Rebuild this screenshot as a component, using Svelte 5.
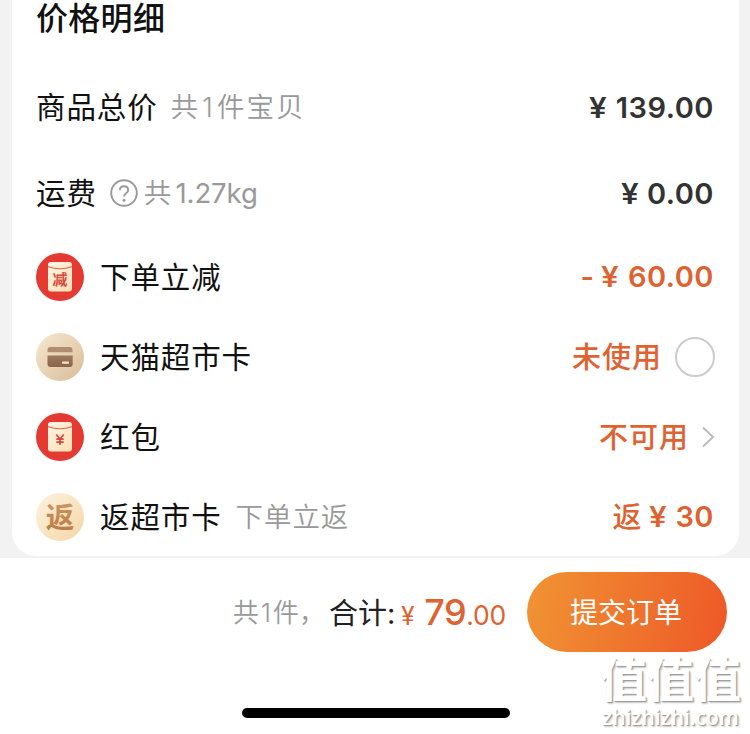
<script lang="ts">
	type Discount = {
		icon: 'minus' | 'card' | 'packet' | 'rebate';
		label: string;
		note?: string;
		prefix?: string;
		amount?: string;
		status?: string;
		control?: 'radio' | 'arrow';
	};

	const discounts: Discount[] = [
		{ icon: 'minus', label: '下单立减', prefix: '-', amount: '60.00' },
		{ icon: 'card', label: '天猫超市卡', status: '未使用', control: 'radio' },
		{ icon: 'packet', label: '红包', status: '不可用', control: 'arrow' },
		{ icon: 'rebate', label: '返超市卡', note: '下单立返', prefix: '返', amount: '30' }
	];
</script>

<svelte:head>
	<title>价格明细</title>
</svelte:head>

<div class="page">
	<section class="card">
		<h2>价格明细</h2>

		<div class="row tall">
			<span class="label">商品总价</span>
			<span class="note goods">共<i>1</i>件宝贝</span>
			<span class="amount"><span class="yen">¥</span>139.00</span>
		</div>

		<div class="row tall">
			<span class="label">运费</span>
			<svg class="help" viewBox="0 0 28 28">
				<circle cx="14" cy="14" r="12.8" />
				<path d="M9.8 11.2c0-2.5 1.8-4 4.2-4s4.2 1.5 4.2 3.8c0 3.2-4.2 3.2-4.2 6.5" />
				<circle class="dot" cx="14" cy="21.2" r="1.5" />
			</svg>
			<span class="note">共</span><span class="note weight">1.27kg</span>
			<span class="amount"><span class="yen">¥</span>0.00</span>
		</div>

		{#each discounts as item}
			<div class="row">
				<svg class="icon" viewBox="0 0 48 48">
					<defs>
						<linearGradient id="cream" x1="0" y1="0" x2="1" y2="1">
							<stop offset="0" stop-color="#fff4e3" />
							<stop offset="1" stop-color="#f9e0b6" />
						</linearGradient>
						<linearGradient id="sand" x1="0" y1="0" x2="1" y2="1">
							<stop offset="0" stop-color="#f6e8d0" />
							<stop offset="1" stop-color="#d9bd98" />
						</linearGradient>
						<linearGradient id="pale" x1="0" y1="0" x2="1" y2="1">
							<stop offset="0" stop-color="#fcf3e1" />
							<stop offset="1" stop-color="#f5d6a5" />
						</linearGradient>
						<linearGradient id="brown" x1="0" y1="0" x2="0" y2="1">
							<stop offset="0" stop-color="#9f7a5e" />
							<stop offset="1" stop-color="#8b6449" />
						</linearGradient>
						<linearGradient id="bronze" x1="0" y1="0" x2="0" y2="1">
							<stop offset="0" stop-color="#d39a67" />
							<stop offset="1" stop-color="#b97842" />
						</linearGradient>
					</defs>
					{#if item.icon === 'minus' || item.icon === 'packet'}
						<circle cx="24" cy="24" r="24" fill="#e43a31" />
						<rect x="12" y="9" width="24" height="29.5" rx="3" fill="url(#cream)" />
						<path d="M12 13.5Q24 18 36 13.5" fill="none" stroke="#e06450" stroke-width="1.2" />
						{#if item.icon === 'minus'}
							<text class="glyph" x="24" y="32" font-size="15" fill="#d8473a">减</text>
						{:else}
							<path
								d="M20.3 21.5l3.7 4.5 3.7-4.5M24 26v6M20.3 26.2h7.4M20.3 29.2h7.4"
								fill="none"
								stroke="#d8473a"
								stroke-width="1.7"
							/>
						{/if}
					{:else if item.icon === 'card'}
						<circle cx="24" cy="24" r="24" fill="url(#sand)" />
						<path d="M11.5 19.3V17a3 3 0 0 1 3-3h19a3 3 0 0 1 3 3v2.3z" fill="#b08c70" />
						<path d="M11.5 22.5h25.2V31a3 3 0 0 1-3 3H14.5a3 3 0 0 1-3-3z" fill="url(#brown)" />
						<rect x="26" y="28.6" width="7" height="2.2" rx=".7" fill="#f3e4cf" />
					{:else}
						<circle cx="24" cy="24" r="24" fill="url(#pale)" />
						<text class="glyph" x="24" y="34.5" font-size="28.5" fill="url(#bronze)">返</text>
					{/if}
				</svg>
				<span class="label">{item.label}</span>
				{#if item.note}
					<span class="note extra">{item.note}</span>
				{/if}

				{#if item.amount}
					<span class="amount hot">
						{#if item.prefix}<span class="prefix" class:cjk={item.prefix !== '-'}>{item.prefix}</span>{/if}<span class="yen">¥</span>{item.amount}
					</span>
				{:else}
					<span class="status">{item.status}</span>
				{/if}

				{#if item.control === 'radio'}
					<span class="radio"></span>
				{:else if item.control === 'arrow'}
					<svg class="arrow" viewBox="0 0 14 22">
						<path d="M2 1.5L12 11L2 20.5" />
					</svg>
				{/if}
			</div>
		{/each}
	</section>

	<footer>
		<div class="checkout">
			<span class="count">共<i>1</i>件，</span>
			<span class="sum">合计:</span>
			<span class="total"><small class="sign">¥</small>79<small>.00</small></span>
			<button>提交订单</button>
		</div>
		<div class="home-bar"></div>
		<div class="watermark">
			<span class="mark">值值值</span>
			<span class="site">zhizhizhi.com</span>
		</div>
	</footer>
</div>

<style>
	:global(body) {
		margin: 0;
		background: #f2f2f2;
	}

	.page {
		height: 734px;
		display: flex;
		flex-direction: column;
		overflow: hidden;
		background: #f2f2f2;
		color: #111;
		font-family: Inter, 'Noto Sans CJK SC', sans-serif;
		white-space: nowrap;
	}

	.card {
		box-sizing: border-box;
		height: 556px;
		margin: 0 11px 0 12px;
		padding: 0 25px 0 24px;
		background: #fff;
		border-radius: 0 0 24px 24px;
	}

	h2 {
		margin: 0;
		height: 64px;
		line-height: 37px;
		font-size: 32px;
		font-weight: 500;
		letter-spacing: 0.3px;
	}

	.row {
		display: flex;
		align-items: center;
		height: 80px;
	}

	.row.tall {
		height: 86.3px;
	}

	.label {
		padding-bottom: 4px;
		font-size: 29.5px;
		letter-spacing: 0.9px;
	}

	.note {
		padding-bottom: 4px;
		color: #999;
		font-size: 27.5px;
		font-weight: 350;
		letter-spacing: 1.2px;
	}

	.note.goods {
		margin-left: 13px;
		letter-spacing: 2px;
	}

	.note.weight {
		margin-left: 3px;
		padding-bottom: 0;
		font-weight: 400;
		letter-spacing: -0.1px;
	}

	.note.extra {
		margin-left: 14px;
		letter-spacing: 0.9px;
	}

	i {
		font-style: normal;
		padding: 0 2px;
	}

	.help {
		width: 28px;
		height: 28px;
		margin: 0 6px 0 13px;
		fill: none;
		stroke: #999;
		stroke-width: 1.9;
	}

	.help .dot {
		fill: #999;
		stroke: none;
	}

	.icon {
		width: 48px;
		height: 48px;
		margin-right: 16px;
	}

	.glyph {
		font-family: 'Noto Sans CJK SC', sans-serif;
		font-weight: 700;
		text-anchor: middle;
	}

	.amount,
	.status {
		margin-left: auto;
		font-size: 29px;
		color: #333;
	}

	.amount {
		display: flex;
		align-items: center;
		font-weight: 600;
		letter-spacing: 0.5px;
	}

	.yen {
		margin-right: 9px;
		font-family: Roboto, sans-serif;
		font-size: 30px;
		font-weight: 500;
		transform: scaleX(1.08);
	}

	.amount.hot,
	.status {
		color: #dd6432;
	}

	.prefix {
		margin-right: 8px;
	}

	.prefix.cjk,
	.status {
		padding-bottom: 3px;
		font-weight: 500;
	}

	.status {
		letter-spacing: 1px;
	}

	.radio {
		box-sizing: border-box;
		width: 40px;
		height: 40px;
		margin-left: 13px;
		margin-right: -1px;
		border: 2px solid #ccc;
		border-radius: 50%;
	}

	.arrow {
		width: 14px;
		height: 22px;
		margin-left: 12px;
		margin-right: -1px;
		fill: none;
		stroke: #bbb;
		stroke-width: 2;
	}

	footer {
		position: relative;
		flex: 1;
		display: flex;
		flex-direction: column;
		align-items: center;
		margin-top: 2px;
		background: #fff;
	}

	.checkout {
		box-sizing: border-box;
		width: 100%;
		height: 108px;
		padding-right: 23px;
		display: flex;
		align-items: center;
		justify-content: flex-end;
	}

	.count {
		margin-right: 4px;
		padding-bottom: 3px;
		color: #999;
		font-size: 26px;
		font-weight: 350;
	}

	.sum {
		padding-bottom: 3px;
		color: #222;
		font-size: 29px;
	}

	.total {
		margin-left: 6px;
		color: #dd6432;
		font-size: 36px;
		font-weight: 500;
		letter-spacing: -0.5px;
	}

	.total small {
		font-size: 26.5px;
		font-weight: 400;
		letter-spacing: -0.2px;
	}

	.total .sign {
		margin-right: 10px;
		font-family: Roboto, sans-serif;
		font-size: 25px;
	}

	button {
		width: 200px;
		height: 80px;
		margin-left: 21px;
		padding: 0 2px 2px 0;
		border: 0;
		border-radius: 40px;
		background: linear-gradient(100deg, #f09433, #ee5b28 95%);
		color: #fff;
		font: 400 28px 'Noto Sans CJK SC', sans-serif;
	}

	.home-bar {
		width: 268px;
		height: 10px;
		margin-top: 42px;
		margin-left: 2px;
		border-radius: 5px;
		background: #000;
	}

	.watermark {
		position: absolute;
		right: 9px;
		bottom: 5px;
		display: flex;
		flex-direction: column;
		align-items: center;
		gap: 3px;
		color: #fff;
		text-shadow:
			1px 1px 1px #999,
			2px 2px 2px #ccc;
	}

	.mark {
		font-family: 'Noto Sans CJK SC', sans-serif;
		font-size: 47px;
		font-weight: 700;
		line-height: 50px;
	}

	.site {
		font-family: 'Open Sans', sans-serif;
		font-size: 21px;
		font-weight: 600;
		line-height: 24px;
	}
</style>
